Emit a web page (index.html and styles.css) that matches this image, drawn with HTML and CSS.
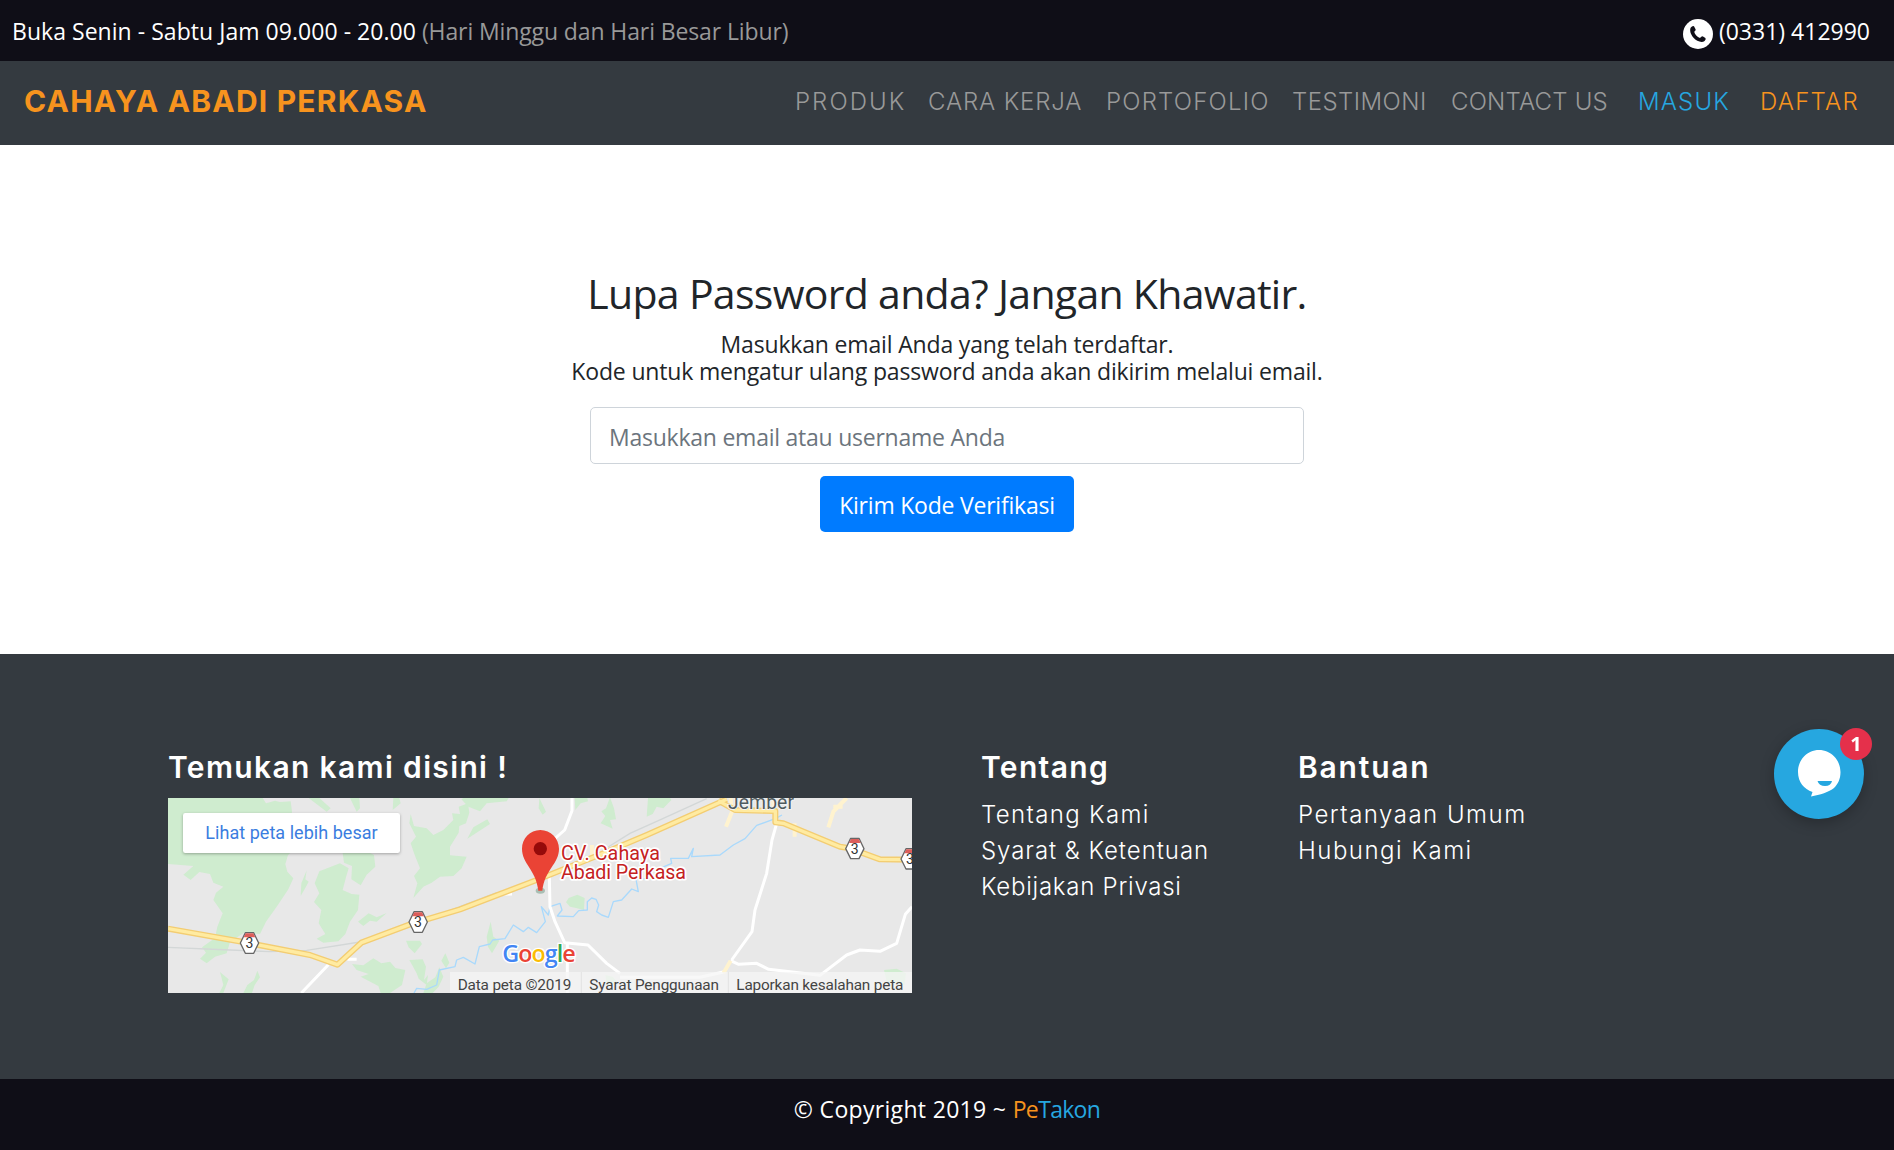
FILE: index.html
```html
<!DOCTYPE html>
<html lang="id">
<head>
<meta charset="utf-8">
<title>Lupa Password - Cahaya Abadi Perkasa</title>
<link rel="stylesheet" href="styles.css">
</head>
<body>
<header>
  <div class="topbar">
    <p><span class="hours">Buka Senin - Sabtu Jam 09.000 - 20.00</span> <span class="closed">(Hari Minggu dan Hari Besar Libur)</span></p>
    <p class="phone">
      <svg class="phone-icon" viewBox="0 0 30 30"><circle cx="15" cy="15" r="15" fill="#fff"/><path d="M7.8 8.6Q9.5 6.3 11 7.2L12.7 10.4Q12.7 11.7 11.2 12.8C11.8 15.6 14.2 18 17 19.1Q18.2 17.4 19.6 17.3L22.4 18.9Q23.4 20 21.6 22.1C18.5 24.3 13.4 22.1 10.5 18.8 7.6 15.5 6.3 11.4 7.8 8.6Z" fill="#0f0e17"/></svg>
      <span>(0331) 412990</span>
    </p>
  </div>
  <nav class="navbar">
    <a class="brand">CAHAYA ABADI PERKASA</a>
    <div class="menu">
      <a class="produk">PRODUK</a>
      <a class="cara">CARA KERJA</a>
      <a class="porto">PORTOFOLIO</a>
      <a class="testi">TESTIMONI</a>
      <a class="contact">CONTACT US</a>
      <a class="login">MASUK</a>
      <a class="register">DAFTAR</a>
    </div>
  </nav>
</header>
<main class="reset">
  <h1>Lupa Password anda? Jangan Khawatir.</h1>
  <p class="lead">Masukkan email Anda yang telah terdaftar.<br>Kode untuk mengatur ulang password anda akan dikirim melalui email.</p>
  <input class="field" type="text" placeholder="Masukkan email atau username Anda">
  <button class="submit">Kirim Kode Verifikasi</button>
</main>
<footer>
  <div class="footer-main">
    <section class="find">
      <h2>Temukan kami disini !</h2>
      <svg class="map" viewBox="24 174 2232 585">
        <rect x="24" y="174" width="2232" height="585" fill="#e8e8e8"/>
        <g fill="#cfeccf">
          <path d="M24 174H308L318 190 345 182 360 186 392 184 396 215 388 260 402 330 384 345 376 372 382 395 400 415 385 448 350 500 318 545 300 582 252 578 210 606 200 640 165 650 140 670 120 656 138 638 126 622 165 594 172 560 188 520 160 480 168 458 190 440 160 428 150 402 118 396 92 420 70 404 100 378 24 372Z"/>
          <path d="M446 174 500 215 512 205 478 174ZM570 174 590 215 600 205 598 174ZM700 174 698 210 722 190 718 174Z"/>
          <path d="M440 391 424 430 422 468 438 440 446 425 436 418Z"/>
          <path d="M548 339 552 368 576 378 574 418 602 436 620 404 646 380 642 345 630 339Z"/>
          <path d="M478 394 540 370 566 385 558 412 548 450 575 462 598 464 594 510 570 545 556 582 535 604 490 608 470 596 496 582 476 550 484 510 462 486 478 460 464 430Z"/>
          <path d="M626 520 650 532 680 519 650 545 630 542 610 558 594 545Z"/>
          <path d="M752 222 762 258 800 265 820 285 850 270 880 240 876 220 900 222 896 200 924 190 928 218 918 250 898 258 896 278 870 320 870 346 920 350 905 385 880 408 840 410 815 428 790 440 760 474 772 430 762 408 780 385 764 345 752 310 768 290 748 250Z"/>
          <path d="M904 178 925 200 960 214 980 190 1040 184 1046 174H910ZM982 238 990 252 922 296 940 262Z"/>
          <path d="M1138 174 1158 215 1148 224 1136 205ZM1244 174 1246 210 1262 190 1284 184 1282 174ZM1350 172 1362 205 1368 238 1350 240 1358 266 1322 250 1336 228 1324 214 1338 205ZM1464 174 1460 230 1478 222 1490 200 1510 205 1534 180 1530 174Z"/>
          <path d="M1218 487 1226 474 1252 464 1274 474 1272 510 1248 504 1230 500Z"/>
          <path d="M992 545 1000 590 1018 602 996 640 984 620 980 590Z"/>
          <path d="M738 602 780 602 786 612 764 640 746 622Z"/>
          <path d="M180 696 206 718 190 759H178L190 735ZM292 692 300 712 284 735 276 759H250L262 735 282 720Z"/>
          <path d="M576 672 610 676 640 655 664 670 690 665 706 684 736 690 726 735 690 759H662L655 738 602 710 626 702 590 690Z"/>
          <path d="M748 660 788 658 798 680 792 720 804 705 800 735 776 716 770 700ZM856 640 868 668 858 685 844 662ZM838 682 850 710 836 740 818 759H790L800 730 826 712Z"/>
          <path d="M1336 705 1358 710 1376 730 1340 735ZM2172 690 2210 686 2238 700 2234 735 2180 725Z"/>
        </g>
        <path d="M24 622 210 630 330 635 440 631 600 606M780 545 900 500 1010 458M1330 330 1410 280 1510 235 1640 176" fill="none" stroke="#d3d7d7" stroke-width="4"/>
        <path d="M762 759 770 745 800 748 830 735 838 690 885 680 890 660 910 652 945 672 958 620 990 612 998 600 1035 596 1060 555 1090 575 1105 562 1130 578 1156 545 1144 500 1165 525 1170 500 1200 490 1206 510 1192 528 1240 530 1256 512 1282 510 1282 485 1295 474 1308 478 1316 495 1310 515 1325 525 1345 532 1360 485 1385 480 1415 447 1435 455 1428 418 1470 415 1465 390 1500 385 1535 370 1532 355 1585 355 1600 325 1595 350 1680 345 1720 315 1755 296 1790 256 1846 236 1866 225" fill="none" stroke="#a9d9fc" stroke-width="4" stroke-linejoin="round"/>
        <g fill="none" stroke="#fff" stroke-width="9" stroke-linejoin="round">
          <path d="M1236 174V212L1214 270 1180 300M1168 410 1170 500 1185 545 1214 608 1284 615 1340 670 1380 700M1222 610V759M1850 250 1836 300 1820 400 1785 510 1776 575 1715 660M1712 662 1736 673 1790 670 1826 688 1980 706 2060 645 2100 630 2160 634 2210 610 2236 523 2256 500M1380 712 1620 712 1690 696M505 674 424 759"/>
          <path d="M562 658H590M1028 462H1056"/>
        </g>
        <path d="M1712 174 1716 215 1698 260M2060 174 2020 215 2005 262M2020 200H2048M1296 315V360M1904 250V290M1712 662 1690 700M1840 174V200" fill="none" stroke="#fff3cf" stroke-width="12"/>
        <g fill="none" stroke-linejoin="round">
          <path d="M24 566 250 606 450 645 532 674 604 608 750 553 900 508 1130 420 1330 340 1460 285 1700 178M1675 182 1725 210 1846 213V247L1870 250 2040 320 2070 325 2160 358 2256 359" stroke="#f3cd72" stroke-width="18"/>
          <path d="M24 566 250 606 450 645 532 674 604 608 750 553 900 508 1130 420 1330 340 1460 285 1700 178M1675 182 1725 210 1846 213V247L1870 250 2040 320 2070 325 2160 358 2256 359" stroke="#ffeba1" stroke-width="10"/>
        </g>
        <g font-family="Roboto" font-size="42" text-anchor="middle" fill="#333" stroke-linejoin="round">
          <g><path d="M256 578H281L296 609 281 640H256L241 609Z" fill="#fff" stroke="#666" stroke-width="4"/><path d="M257 580H280L286 592H251Z" fill="#dd5e5a"/><text x="268" y="624">3</text></g>
          <g><path d="M762 515H787L802 546 787 577H762L747 546Z" fill="#fff" stroke="#666" stroke-width="4"/><path d="M763 517H786L792 529H757Z" fill="#dd5e5a"/><text x="774" y="561">3</text></g>
          <g><path d="M2072 295H2097L2112 326 2097 356H2072L2057 326Z" fill="#fff" stroke="#666" stroke-width="4"/><path d="M2073 297H2096L2102 309H2067Z" fill="#dd5e5a"/><text x="2084" y="341">3</text></g>
          <g><path d="M2238 326H2263L2278 357 2263 387H2238L2223 357Z" fill="#fff" stroke="#666" stroke-width="4"/><path d="M2239 328H2262L2268 340H2233Z" fill="#dd5e5a"/><text x="2250" y="372">3</text></g>
        </g>
        <ellipse cx="1141" cy="452" rx="14" ry="9" fill="#a9bfb4"/>
        <path d="M1141 270C1110 270 1086 295 1086 326C1086 372 1128 388 1135 452H1147C1154 388 1197 372 1197 326C1197 295 1172 270 1141 270Z" fill="#ea4335"/>
        <circle cx="1141" cy="326" r="20" fill="#960a0a"/>
        <g font-family="Roboto" stroke-linejoin="round" paint-order="stroke">
          <g font-size="59" fill="#c5221f" stroke="#fff" stroke-width="10">
            <text x="1203" y="360" textLength="297">CV. Cahaya</text>
            <text x="1203" y="418" textLength="375">Abadi Perkasa</text>
          </g>
          <text x="1704" y="207" font-size="58" fill="#4f5b5f" stroke="#f2f2f2" stroke-width="6" textLength="198">Jember</text>
        </g>
        <text x="1027" y="667" font-family="Open Sans" font-size="70" font-weight="600" stroke="#fff" stroke-width="8" paint-order="stroke" textLength="220"><tspan fill="#4285f4">G</tspan><tspan fill="#ea4335">o</tspan><tspan fill="#fbbc05">o</tspan><tspan fill="#4285f4">g</tspan><tspan fill="#34a853">l</tspan><tspan fill="#ea4335">e</tspan></text>
        <rect x="870" y="696" width="1386" height="63" fill="#f5f5f5" fill-opacity=".75"/>
        <path d="M1264 696V759M1705 696V759" stroke="#e2e2e2" stroke-width="3"/>
        <g font-family="Roboto" font-size="46" fill="#444">
          <text x="893" y="751" textLength="341">Data peta ©2019</text>
          <text x="1288" y="751" textLength="389">Syarat Penggunaan</text>
          <text x="1729" y="751" textLength="501">Laporkan kesalahan peta</text>
        </g>
        <rect class="map-button" x="69" y="219" width="651" height="120" rx="7" fill="#fff"/>
        <text x="136" y="297" font-family="Roboto" font-size="54" fill="#3a7de0" textLength="517">Lihat peta lebih besar</text>
      </svg>
    </section>
    <section class="about">
      <h2>Tentang</h2>
      <a class="tentang">Tentang Kami</a>
      <a class="syarat">Syarat &amp; Ketentuan</a>
      <a class="privasi">Kebijakan Privasi</a>
    </section>
    <section class="help">
      <h2>Bantuan</h2>
      <a>Pertanyaan Umum</a>
      <a>Hubungi Kami</a>
    </section>
  </div>
  <div class="copyright"><span>© Copyright 2019 ~ </span><span class="pe">Pe</span><span class="takon">Takon</span></div>
</footer>
<div class="chat">
  <svg viewBox="0 0 90 90"><path d="M45 21C33 21 24 31 24 43C24 53 30 60 38.5 63L37 67.5C46 66 55 63 60 59C64 55 66.5 50 66.5 43C66.5 31 57 21 45 21Z" fill="#fff"/><path d="M43.5 52H58Q57 57 51 57T43.5 52Z" fill="#26a7e0"/></svg>
  <span class="badge">1</span>
</div>
</body>
</html>
```
FILE: styles.css
```css
body {
  margin: 0;
  font: 23px/27px "Open Sans", sans-serif;
  color: #212529;
  background: #fff;
}

p, h1, h2 { margin: 0; }

.topbar {
  box-sizing: border-box;
  height: 61px;
  padding: 0 24px 0 12px;
  display: flex;
  justify-content: space-between;
  background: #0f0e17;
  color: #fff;
  line-height: 62px;
}
.hours { letter-spacing: .04px; }
.closed { color: #999; letter-spacing: -.11px; }
.phone {
  display: flex;
  align-items: center;
  gap: 6px;
  height: 62px;
}
.phone-icon { width: 30px; height: 30px; margin-top: 6px; }

.navbar {
  box-sizing: border-box;
  height: 84px;
  padding-left: 24px;
  display: flex;
  justify-content: space-between;
  background: #343a40;
  line-height: 81px;
}
.brand {
  color: #f7931e;
  font-family: Inter, sans-serif;
  font-size: 30px;
  font-weight: 700;
  letter-spacing: 1.2px;
}
.menu {
  display: grid;
  grid-template-columns: 133px 178px 186px 159px 187px 122px 134px;
  color: #999;
  font-family: Inter, sans-serif;
  font-size: 24px;
  font-weight: 300;
  white-space: nowrap;
}
.produk { letter-spacing: 2.05px; }
.cara { letter-spacing: .85px; }
.porto { letter-spacing: 1.2px; }
.testi { letter-spacing: .45px; }
.contact { letter-spacing: .2px; }
.login { color: #26a7e0; letter-spacing: 1.15px; }
.register { color: #f7931e; letter-spacing: 1.25px; }

.reset {
  box-sizing: border-box;
  height: 509px;
  padding-top: 123px;
  display: flex;
  flex-direction: column;
  align-items: center;
  text-align: center;
}
h1 {
  font-size: 41px;
  font-weight: 400;
  line-height: 50px;
  letter-spacing: -.7px;
}
.lead { margin-top: 13px; letter-spacing: -.17px; }
.field {
  box-sizing: border-box;
  width: 714px;
  height: 57px;
  margin: 22px 0 12px;
  padding: 3px 18px 0;
  border: 1px solid #ced4da;
  border-radius: 5px;
  font: 23px "Open Sans", sans-serif;
  letter-spacing: -.24px;
}
.field::placeholder { color: #6c757d; opacity: 1; }
.submit {
  width: 254px;
  height: 56px;
  padding: 2px 0 0;
  border: 0;
  border-radius: 5px;
  background: #007bff;
  color: #fff;
  font: 23px "Open Sans", sans-serif;
  letter-spacing: -.22px;
}

.footer-main {
  box-sizing: border-box;
  height: 425px;
  padding: 95px 0 0 168px;
  display: grid;
  grid-template-columns: 813px 317px 400px;
  background: #343a40;
  color: #fff;
  font-family: Inter, sans-serif;
}
h2 {
  font-size: 30px;
  font-weight: 600;
  line-height: 36px;
  letter-spacing: 1.35px;
}
.help h2 { letter-spacing: 1.8px; }
.map { display: block; width: 744px; height: 195px; margin-top: 13px; }
.map-button { filter: drop-shadow(0 3px 5px rgba(0, 0, 0, .3)); }
.about h2, .help h2 { margin-bottom: 12px; }
.about a, .help a {
  display: block;
  font-size: 24px;
  font-weight: 300;
  line-height: 36px;
  letter-spacing: 1.5px;
}
.about .tentang { letter-spacing: 1.35px; }
.about .syarat { letter-spacing: .95px; }
.about .privasi { letter-spacing: .75px; }

.copyright {
  height: 71px;
  background: #0f0e17;
  color: #fff;
  line-height: 61px;
  text-align: center;
  white-space: pre;
}
.copyright span { letter-spacing: .32px; }
.copyright .pe { color: #f7931e; letter-spacing: -.6px; }
.copyright .takon { color: #26a7e0; letter-spacing: -.7px; }

.chat {
  position: fixed;
  left: 1774px;
  top: 729px;
  width: 90px;
  height: 90px;
  border-radius: 50%;
  background: #26a7e0;
  box-shadow: 0 4px 14px rgba(0, 0, 0, .25);
}
.badge {
  position: absolute;
  left: 66px;
  top: -1px;
  width: 32px;
  height: 32px;
  border-radius: 50%;
  background: #e5304b;
  color: #fff;
  font: 700 20px/32px "Open Sans", sans-serif;
  text-align: center;
}
```
